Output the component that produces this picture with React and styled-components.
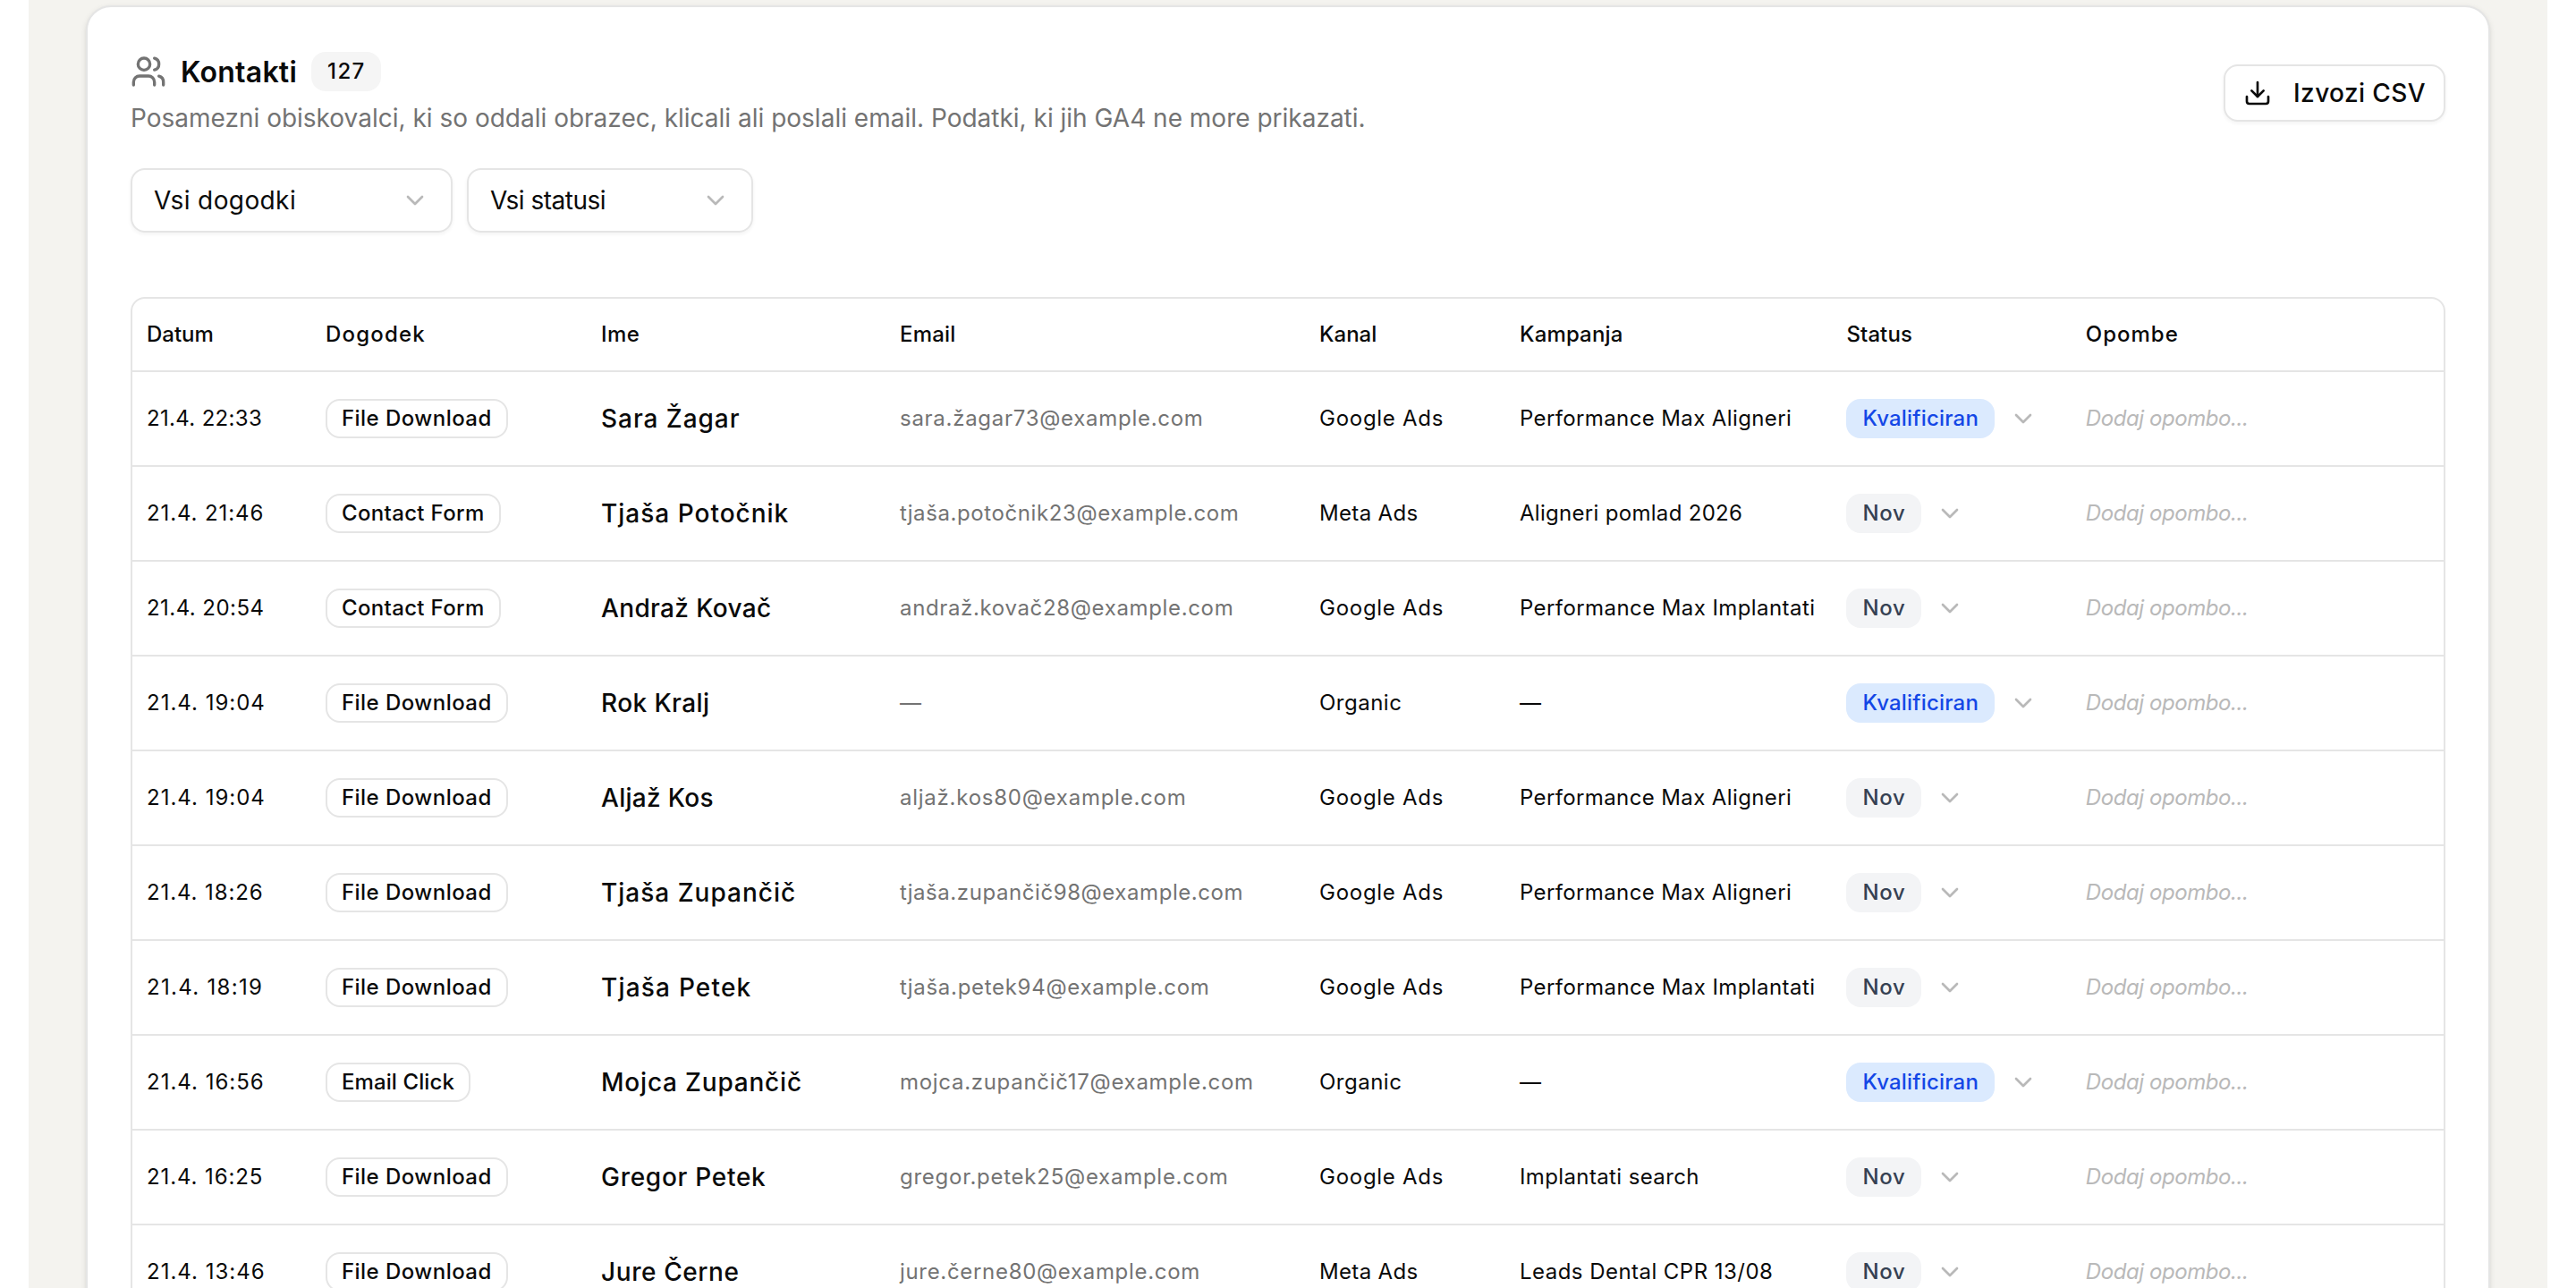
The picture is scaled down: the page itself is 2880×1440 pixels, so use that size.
import React from 'react'
import styled, { createGlobalStyle } from "styled-components"
import { Users, Download, ChevronDown } from "lucide-react"

const Contacts = [
  {id: 1, date: "21.4. 22:33", event: "File Download", name: "Sara Žagar", email: "sara.žagar73@example.com", channel: "Google Ads", campaign: "Performance Max Aligneri", status: "Kvalificiran"},
  {id: 2, date: "21.4. 21:46", event: "Contact Form", name: "Tjaša Potočnik", email: "tjaša.potočnik23@example.com", channel: "Meta Ads", campaign: "Aligneri pomlad 2026", status: "Nov"},
  {id: 3, date: "21.4. 20:54", event: "Contact Form", name: "Andraž Kovač", email: "andraž.kovač28@example.com", channel: "Google Ads", campaign: "Performance Max Implantati", status: "Nov"},
  {id: 4, date: "21.4. 19:04", event: "File Download", name: "Rok Kralj", email: "—", channel: "Organic", campaign: "—", status: "Kvalificiran"},
  {id: 5, date: "21.4. 19:04", event: "File Download", name: "Aljaž Kos", email: "aljaž.kos80@example.com", channel: "Google Ads", campaign: "Performance Max Aligneri", status: "Nov"},
  {id: 6, date: "21.4. 18:26", event: "File Download", name: "Tjaša Zupančič", email: "tjaša.zupančič98@example.com", channel: "Google Ads", campaign: "Performance Max Aligneri", status: "Nov"},
  {id: 7, date: "21.4. 18:19", event: "File Download", name: "Tjaša Petek", email: "tjaša.petek94@example.com", channel: "Google Ads", campaign: "Performance Max Implantati", status: "Nov"},
  {id: 8, date: "21.4. 16:56", event: "Email Click", name: "Mojca Zupančič", email: "mojca.zupančič17@example.com", channel: "Organic", campaign: "—", status: "Kvalificiran"},
  {id: 9, date: "21.4. 16:25", event: "File Download", name: "Gregor Petek", email: "gregor.petek25@example.com", channel: "Google Ads", campaign: "Implantati search", status: "Nov"},
  {id: 10, date: "21.4. 13:46", event: "File Download", name: "Jure Černe", email: "jure.černe80@example.com", channel: "Meta Ads", campaign: "Leads Dental CPR 13/08", status: "Nov"},
];

const Columns = ["Datum", "Dogodek", "Ime", "Email", "Kanal", "Kampanja", "Status", "Opombe"];

// letter spacing in px, labels that are not listed use the font's own
const Tracking = {
  "Dogodek": 1.2, "Ime": 0.4, "Email": 0.2, "Kampanja": 0.15, "Status": 0.1, "Opombe": 1,
  "21.4. 22:33": 0.33, "21.4. 21:46": 0.9, "21.4. 20:54": 0.45, "21.4. 19:04": 1, "21.4. 18:26": 0.9,
  "21.4. 18:19": 1.3, "21.4. 16:56": 1, "21.4. 16:25": 0.9, "21.4. 13:46": 1,
  "File Download": 0.46, "Contact Form": 0.34, "Email Click": 0.1,
  "Sara Žagar": 0.95, "Tjaša Potočnik": 1, "Andraž Kovač": 0.35, "Rok Kralj": 0.4, "Aljaž Kos": 0.3,
  "Tjaša Zupančič": 1, "Tjaša Petek": 1.2, "Mojca Zupančič": 0.79, "Gregor Petek": 0.72, "Jure Černe": 0.6,
  "sara.žagar73@example.com": 0.72, "tjaša.potočnik23@example.com": 0.6, "andraž.kovač28@example.com": 0.65,
  "aljaž.kos80@example.com": 0.75, "tjaša.zupančič98@example.com": 0.57, "tjaša.petek94@example.com": 0.7,
  "mojca.zupančič17@example.com": 0.7, "gregor.petek25@example.com": 0.74, "jure.černe80@example.com": 0.68,
  "Google Ads": 0.73, "Meta Ads": 0.35, "Organic": 0.5,
  "Performance Max Aligneri": 0.38, "Performance Max Implantati": 0.42, "Aligneri pomlad 2026": 0.3,
  "Implantati search": 0.38, "Leads Dental CPR 13/08": 0.46,
  "Kvalificiran": 0.2, "Nov": 0.7,
};

function App() {
  return (
    <>
    <GlobalStyle />
    <Page>
      <Card>
        <Header>
          <div>
            <Title>
              <Users size={40} color="#737373" />
              <h2>Kontakti</h2>
              <Count>127</Count>
            </Title>
            <Description>Posamezni obiskovalci, ki so oddali obrazec, klicali ali poslali email. Podatki, ki jih GA4 ne more prikazati.</Description>
          </div>
          <ExportButton>
            <Download size={32} />
            Izvozi CSV
          </ExportButton>
        </Header>
        <Filters>
          <Select $width={360} $track={0.4}>Vsi dogodki<Chevron size={32} /></Select>
          <Select $width={320} $track={-0.5}>Vsi statusi<Chevron size={32} /></Select>
        </Filters>
        <Table>
          <HeadRow>
            {Columns.map((column) => <Cell key={column} $track={Tracking[column]}>{column}</Cell>)}
          </HeadRow>
          {Contacts.map((contact) => {
            return(
              <Row key={contact.id}>
                <Cell $track={Tracking[contact.date]}>{contact.date}</Cell>
                <Cell><EventBadge $track={Tracking[contact.event]}>{contact.event}</EventBadge></Cell>
                <NameCell $track={Tracking[contact.name]}>{contact.name}</NameCell>
                <EmailCell $track={Tracking[contact.email]}>{contact.email}</EmailCell>
                <Cell $track={Tracking[contact.channel]}>{contact.channel}</Cell>
                <Cell $track={Tracking[contact.campaign]}>{contact.campaign}</Cell>
                <StatusCell>
                  <StatusBadge $track={Tracking[contact.status]} $qualified={contact.status === "Kvalificiran"}>{contact.status}</StatusBadge>
                  <Chevron size={32} />
                </StatusCell>
                <NoteCell $track={-0.42}>Dodaj opombo...</NoteCell>
              </Row>
            )
          })}
        </Table>
      </Card>
    </Page>
    </>
  )
}

const GlobalStyle = createGlobalStyle`
  * {
    box-sizing: border-box;
  }
  body {
    margin: 0;
    background: #fff;
    color: #0a0a0a;
    font-family: Inter, sans-serif;
    overflow: hidden;
  }
`;

const Page = styled.div`
  height: 1440px;
  margin: 0 32px;
  padding: 6px 64px 0;
  background: #f4f3ef;
  overflow: hidden;
`;

const Card = styled.section`
  height: 1600px;
  padding: 50px 48px;
  background: #fff;
  border: 2px solid #e5e5e5;
  border-radius: 28px;
  box-shadow: 0 2px 6px rgba(0, 0, 0, 0.1), 0 2px 4px -2px rgba(0, 0, 0, 0.1);
`;

const Header = styled.div`
  display: flex;
  justify-content: space-between;
  align-items: flex-start;
  height: 130px;
`;

const Title = styled.div`
  display: flex;
  align-items: center;
  gap: 16px;
  height: 44px;

  h2 {
    margin: 0;
    padding-top: 2px;
    font-size: 32px;
    line-height: 44px;
    font-weight: 600;
    letter-spacing: 0.25px;
  }
`;

const Count = styled.span`
  height: 44px;
  padding: 0 17px 0 18px;
  border-radius: 16px;
  background: #f5f5f5;
  font-size: 24px;
  line-height: 44px;
  font-weight: 500;
  letter-spacing: 1.4px;
`;

const Description = styled.p`
  margin: 10px 0 0;
  color: #737373;
  font-size: 28px;
  line-height: 40px;
`;

const ExportButton = styled.button`
  display: flex;
  align-items: center;
  gap: 24px;
  height: 64px;
  margin-top: 14px;
  padding: 0 20px;
  background: #fff;
  border: 2px solid #e5e5e5;
  border-radius: 16px;
  box-shadow: 0 2px 4px rgba(0, 0, 0, 0.05);
  color: #0a0a0a;
  font-family: inherit;
  font-size: 28px;
  font-weight: 500;
  letter-spacing: 0.4px;
`;

const Filters = styled.div`
  display: flex;
  gap: 16px;
`;

const Select = styled.div`
  display: flex;
  align-items: center;
  justify-content: space-between;
  width: ${(props) => props.$width}px;
  height: 72px;
  padding: 0 24px;
  border: 2px solid #e5e5e5;
  border-radius: 16px;
  box-shadow: 0 2px 4px rgba(0, 0, 0, 0.05);
  font-size: 28px;
  letter-spacing: ${(props) => props.$track}px;
`;

const Chevron = styled(ChevronDown)`
  flex: none;
  color: #b9b9b9;
`;

const Table = styled.div`
  margin-top: 72px;
  border: 2px solid #e5e5e5;
  border-radius: 16px;
`;

const Row = styled.div`
  display: grid;
  grid-template-columns: 200px 308px 334px 469px 224px 365.4px 267.4px 1fr;
  align-items: center;
  height: 106px;
  border-bottom: 2px solid #e5e5e5;
  font-size: 24px;
  line-height: 40px;
  white-space: nowrap;
`;

const HeadRow = styled(Row)`
  height: 82px;
  font-weight: 500;
`;

const Cell = styled.div`
  padding: 0 16px;
  letter-spacing: ${(props) => props.$track || 0}px;
`;

const NameCell = styled(Cell)`
  font-size: 28px;
  font-weight: 500;
`;

const EmailCell = styled(Cell)`
  color: #737373;
`;

const NoteCell = styled(Cell)`
  color: #b9b9b9;
  font-style: italic;
`;

const StatusCell = styled(Cell)`
  display: flex;
  align-items: center;
  gap: 16px;
`;

const EventBadge = styled.span`
  display: block;
  width: fit-content;
  height: 44px;
  padding: 0 16px;
  border: 2px solid #e5e5e5;
  border-radius: 16px;
  font-weight: 500;
  letter-spacing: ${(props) => props.$track || 0}px;
`;

const StatusBadge = styled(EventBadge)`
  border-color: transparent;
  background: ${(props) => props.$qualified ? "#dbeafe" : "#f3f4f6"};
  color: ${(props) => props.$qualified ? "#1447e6" : "#364153"};
`;

export default App
